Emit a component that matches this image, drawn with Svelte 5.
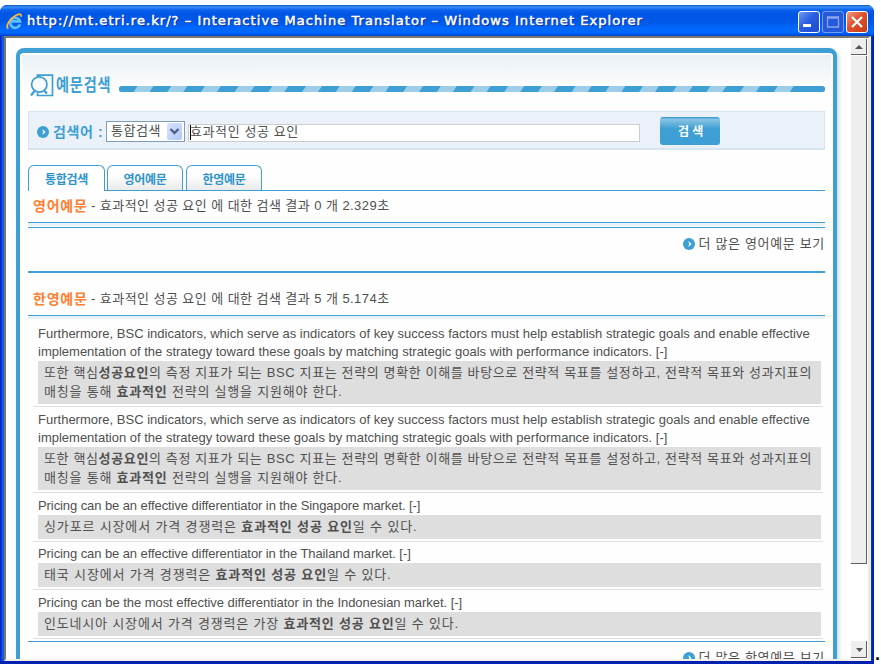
<script>
  // Spreads or tightens the letters of a run so that it fills the given width.
  function fit(node, width) {
    const natural = node.offsetWidth;
    const count = [...node.textContent].length;
    if (natural && count) node.style.letterSpacing = (width - natural) / count + 'px';
  }

  const bsc = {
    height: 86,
    en: [
      ['Furthermore, BSC indicators, which serve as indicators of key success factors must help establish strategic goals and enable effective', 772],
      ['implementation of the strategy toward these goals by matching strategic goals with performance indicators. [-]', 629]
    ],
    ko: [
      { w: 768, parts: [['또한 핵심'], ['성공요인', true], ['의 측정 지표가 되는 BSC 지표는 전략의 명확한 이해를 바탕으로 전략적 목표를 설정하고, 전략적 목표와 성과지표의']] },
      { w: 298, parts: [['매칭을 통해 '], ['효과적인', true], [' 전략의 실행을 지원해야 한다.']] }
    ]
  };
  const items = [
    bsc,
    bsc,
    {
      height: 49,
      en: [['Pricing can be an effective differentiator in the Singapore market. [-]', 382]],
      ko: [{ w: 373, parts: [['싱가포르 시장에서 가격 경쟁력은 '], ['효과적인 성공 요인', true], ['일 수 있다.']] }]
    },
    {
      height: 48,
      en: [['Pricing can be an effective differentiator in the Thailand market. [-]', 373]],
      ko: [{ w: 348, parts: [['태국 시장에서 가격 경쟁력은 '], ['효과적인 성공 요인', true], ['일 수 있다.']] }]
    },
    {
      height: 49,
      en: [['Pricing can be the most effective differentiator in the Indonesian market. [-]', 424]],
      ko: [{ w: 415, parts: [['인도네시아 시장에서 가격 경쟁력은 가장 '], ['효과적인 성공 요인', true], ['일 수 있다.']] }]
    }
  ];
  const tabs = ['통합검색', '영어예문', '한영예문'];
  const stripes = Array.from({ length: 20 }, (_, i) => 15.5 + i * 33.7);
</script>

{#snippet bullet()}
  <svg class="bullet" width="12" height="12" viewBox="0 0 12 12">
    <circle cx="6" cy="6" r="6" fill="#3d9fd3" />
    <path d="M5.6 3.2 8.6 6 5.6 8.8V7.2L6.6 6 5.6 4.8Z" fill="#fff" />
  </svg>
{/snippet}

<div class="screen">
  <div class="window">
    <header class="titlebar">
      <svg class="ie" width="17" height="17" viewBox="0 0 17 17">
        <path d="M14 11.3A5 5 0 1 1 14 8.3H5" fill="none" stroke="#5cc0f6" stroke-width="2.7" />
        <path d="M2.2 15.7C-.7 13.500 3.500 5.500 10 2.200c3.600-1.600 5.800-1.200 4.900 1.600" fill="none" stroke="#f4b640" stroke-width="1.8" />
      </svg>
      <h1><span use:fit={616}>http://mt.etri.re.kr/? – Interactive Machine Translator – Windows Internet Explorer</span></h1>
      <div class="controls">
        <span class="ctl"><svg width="20" height="20"><path d="M4 12h8v3H4z" fill="#fff" /></svg></span>
        <span class="ctl dim"><svg width="20" height="20"><path d="M4.5 5h11v10h-11z M4 6h12" fill="none" stroke="#8ca4ed" stroke-width="1.3" /></svg></span>
        <span class="ctl close"><svg width="20" height="20"><path d="M5 5 15 15M15 5 5 15" stroke="#fff" stroke-width="2.3" /></svg></span>
      </div>
    </header>

    <div class="view">
      <main class="page">
        <section class="panel">
          <div class="heading">
            <svg width="24" height="23" viewBox="0 0 24 23" fill="none" stroke="#3d9fd3">
              <path d="M7.5 3V1.2H22.5V21.5H7.500V19" stroke-width="1.7" />
              <circle cx="9.300" cy="10.500" r="7.700" fill="#f8fbfd" stroke-width="1.7" />
              <path d="M4.500 17 1 21.500M13.500 16l3.500 3.500" stroke-width="2.2" />
            </svg>
            <h2><span use:fit={68}>예문검색</span></h2>
            <svg class="bar" width="706" height="6" viewBox="0 0 706 6">
              <rect width="706" height="6" rx="2.5" fill="#3d9fd3" />
              {#each stripes as x}
                <path d="M{x + 3} 0h16l-4 6h-16z" fill="#9dcde8" />
              {/each}
            </svg>
          </div>

          <div class="search">
            {@render bullet()}
            <b class="label"><span use:fit={50}>검색어 :</span></b>
            <div class="select">
              <span class="picked"><span use:fit={50}>통합검색</span></span>
              <span class="drop"><svg width="15" height="17"><path d="M3.5 6 7.5 10l4-4" fill="none" stroke="#4d6185" stroke-width="2.4" /></svg></span>
            </div>
            <div class="input"><span use:fit={109}>효과적인 성공 요인</span></div>
            <button><span use:fit={24}>검 색</span></button>
          </div>

          <nav>
            {#each tabs as tab, i}
              <div class="tab" class:on={i === 0}><span use:fit={43}>{tab}</span></div>
            {/each}
          </nav>

          <div class="result first">
            <b><span use:fit={55}>영어예문</span></b>
            <span class="sum"><span use:fit={299}>- 효과적인 성공 요인 에 대한 검색 결과 0 개 2.329초</span></span>
          </div>
          <div class="double"></div>
          <div class="more">{@render bullet()}<span use:fit={126}>더 많은 영어예문 보기</span></div>
          <div class="result second">
            <b><span use:fit={55}>한영예문</span></b>
            <span class="sum"><span use:fit={299}>- 효과적인 성공 요인 에 대한 검색 결과 5 개 5.174초</span></span>
          </div>
          <div class="rule"></div>

          <div class="items">
            {#each items as item}
              <article style:height="{item.height}px">
                {#each item.en as [text, width]}
                  <p><span use:fit={width}>{text}</span></p>
                {/each}
                <div class="ko">
                  {#each item.ko as line}
                    <p><span use:fit={line.w}>{#each line.parts as [text, strong]}{#if strong}<b>{text}</b>{:else}{text}{/if}{/each}</span></p>
                  {/each}
                </div>
              </article>
            {/each}
          </div>
          <div class="more last">{@render bullet()}<span use:fit={126}>더 많은 한영예문 보기</span></div>
        </section>
      </main>

      <div class="scroll">
        <span class="arrow"><svg width="16" height="15"><path d="M4 10h8L8 6z" fill="#555" /></svg></span>
        <span class="thumb"></span>
        <span class="arrow down"><svg width="16" height="16"><path d="M5 7h7l-3.500 4z" fill="#555" /></svg></span>
      </div>
    </div>
  </div>
  <span class="dot">.</span>
</div>

<style>
  :global(body) { background: #fff; overflow: hidden; }
  .screen {
    width: 881px; height: 664px; box-sizing: border-box; padding-top: 5px;
    display: flex; overflow: hidden; background: #fff;
    font: 13px/18px "Liberation Sans", "Noto Sans CJK KR", sans-serif; color: #505050;
  }
  span, p, h1, h2 { white-space: pre; }
  p, h1, h2 { margin: 0; font-size: inherit; }
  svg { display: block; flex: none; }
  .window {
    width: 874px; height: 659px; flex: none; box-sizing: border-box; display: flex; flex-direction: column;
    border-radius: 7px 7px 0 0; overflow: hidden;
    background: linear-gradient(90deg, #0019a8 0, #0831d9 1px, #1268ee 3px, #0050d8 4px, #0050d8 870px, #0030c8 872px, #00139c 874px);
    border-bottom: 3px solid #0020b0;
  }
  .titlebar {
    height: 31px; flex: none; display: flex; align-items: center; box-sizing: border-box; padding: 1px 6px 0 6px;
    background: linear-gradient(#0a58c8 0, #3b8ef8 2px, #0a62ee 5px, #0054e3 9px, #0058e8 17px, #0069ff 24px, #0066fb 28px, #0040cc 31px);
  }
  .ie { margin-top: 1px; }
  h1 {
    flex: 1; margin-left: 4px; color: #fff; font: 13px/18px "DejaVu Sans", sans-serif;
    -webkit-text-stroke: 0.5px #fff; text-shadow: 1px 1px 0 #0a1c80;
  }
  .controls { display: flex; gap: 2px; padding-top: 2px; }
  .ctl {
    width: 22px; height: 22px; box-sizing: border-box; border: 1px solid #fff; border-radius: 3px;
    background: linear-gradient(135deg, #6f9bf5, #2a5de0 45%, #1c4bd0);
  }
  .dim { border-color: #7a9cee; background: #2459dc; }
  .close { background: linear-gradient(135deg, #f09a80, #e0502c 45%, #c83c18); }
  .view {
    flex: 1; min-height: 0; margin: 0 3px 0 4px; box-sizing: border-box; display: flex; background: #fff;
    border: solid #7b776a; border-width: 2px 0 0 2px; border-right: 3px solid #f0ebe0; border-bottom: 2px solid #f2f0e8;
  }
  .page { width: 845px; flex: none; box-sizing: border-box; padding: 10px 14px 0 10px; overflow: hidden; }
  .panel {
    width: 821px; height: 640px; box-sizing: border-box; border: 4px solid #3d9fd3; border-top-width: 5px;
    border-radius: 8px 8px 0 0; box-shadow: 2px 2px 4px #c5e0ef; padding: 0 8px;
    background: linear-gradient(#eaf1f6, #fefefe 36px, #fefefe) 2px 2px / 809px 640px no-repeat #fff;
  }
  .heading { height: 58px; box-sizing: border-box; padding: 21px 0 0 2px; display: flex; align-items: flex-start; }
  /* Condensed caption: set at full width, then narrowed. */
  h2 { width: 63px; margin: -1px 0 0 2px; color: #3d9fd3; font: bold 17.5px/22px "Noto Sans CJK KR", sans-serif; }
  h2 span { display: inline-block; transform: scaleX(0.81); transform-origin: 0 0; }
  .bar { margin-top: 12px; }
  .search {
    width: 797px; height: 39px; box-sizing: border-box; display: flex; align-items: center;
    background: #eaf1f8; border: 1px solid #d6e5f0; border-bottom-width: 2px; padding-left: 8px;
  }
  .search .bullet { margin-top: 3px; }
  .label { width: 53px; margin-left: 4px; color: #3d9fd3; font-size: 14px; margin-top: 3px; }
  .select {
    width: 79px; height: 21px; box-sizing: border-box; border: 1px solid #7f9db9; background: #fff; margin-top: 2px;
    display: flex; align-items: center; justify-content: space-between; padding: 0 2px 0 4px;
  }
  .picked { margin-top: -1px; }
  .drop { width: 15px; height: 17px; background: linear-gradient(135deg, #d8e3ff, #b0c6f8); border-radius: 2px; }
  .input {
    width: 452px; height: 18px; box-sizing: border-box; border: 1px solid #ccc; background: #fff;
    margin: 5px 0 0 3px; padding-left: 1px; line-height: 13px; position: relative;
  }
  .input::before { content: ""; position: absolute; left: 1px; top: 0; width: 1px; height: 15px; background: #000; }
  button {
    width: 60px; height: 28px; margin-left: 20px; margin-top: 1px; border: 0; border-radius: 3px; padding: 0;
    background: linear-gradient(#3d9fd3 0, #3d9fd3 1px, #8cc5e4 2px, #3d9fd3 12px); color: #fff;
    font: bold 12px/28px "Noto Sans CJK KR", sans-serif; word-spacing: 3px;
  }
  nav {
    height: 26px; width: 797px; margin-top: 15px; display: flex; gap: 3px; box-sizing: border-box;
    border-bottom: 1px solid #3d9fd3;
  }
  .tab {
    width: 76px; height: 25px; box-sizing: border-box; border: 1px solid #3d9fd3; border-bottom: 0; border-radius: 6px 6px 0 0;
    background: linear-gradient(#fff 35%, #eaeaea); text-align: center; color: #2f94cc;
    font: bold 12px/26px "Noto Sans CJK KR", sans-serif;
  }
  .on { width: 77px; height: 26px; background: #fefefe; margin-right: -1px; }
  .result { width: 797px; box-sizing: border-box; padding-left: 5px; display: flex; line-height: 18px; }
  .result b { width: 58px; color: #ff8033; font-size: 14px; }
  .first { height: 31px; padding-top: 6px; }
  .double { width: 797px; height: 6px; box-sizing: border-box; border: solid #3d9fd3; border-width: 1px 0; background: linear-gradient(#eaf1f6 3px, #fff 3px); }
  .more { width: 797px; height: 43px; box-sizing: border-box; display: flex; justify-content: flex-end; gap: 4px; padding-top: 7px; }
  .more .bullet { margin-top: 3px; }
  .second { height: 44px; border-top: 2px solid #3d9fd3; padding-top: 17px; }
  .rule { width: 797px; height: 4px; box-sizing: border-box; border-top: 1px solid #3d9fd3; background: #eaf1f6; }
  .items { width: 797px; height: 323px; box-sizing: border-box; padding: 2px 2px 0 5px; border-bottom: 1px solid #3d9fd3; }
  article {
    box-sizing: border-box; display: flex; flex-direction: column; justify-content: flex-end;
    padding: 0 2px 2px 5px; border-bottom: 1px solid #e0e0e0; font-size: 13px; line-height: 18px;
  }
  .ko { background: #dedede; padding: 2px 0 3px 6px; line-height: 19px; }
  .scroll { width: 16px; flex: none; display: flex; flex-direction: column; }
  .arrow { height: 16px; margin-top: 1px; box-sizing: border-box; background: #eee; border: solid #606060; border-width: 0 1px 1px 0; }
  .thumb { height: 508px; margin-top: 1px; box-sizing: border-box; background: #eee; border: solid #606060; border-width: 0 1px 1px 0; }
  .down { height: 17px; margin-top: auto; margin-bottom: 1px; }
  .dot { align-self: flex-end; color: #000; font: bold 18px/20px "Liberation Sans", sans-serif; margin-left: 1px; }
</style>
